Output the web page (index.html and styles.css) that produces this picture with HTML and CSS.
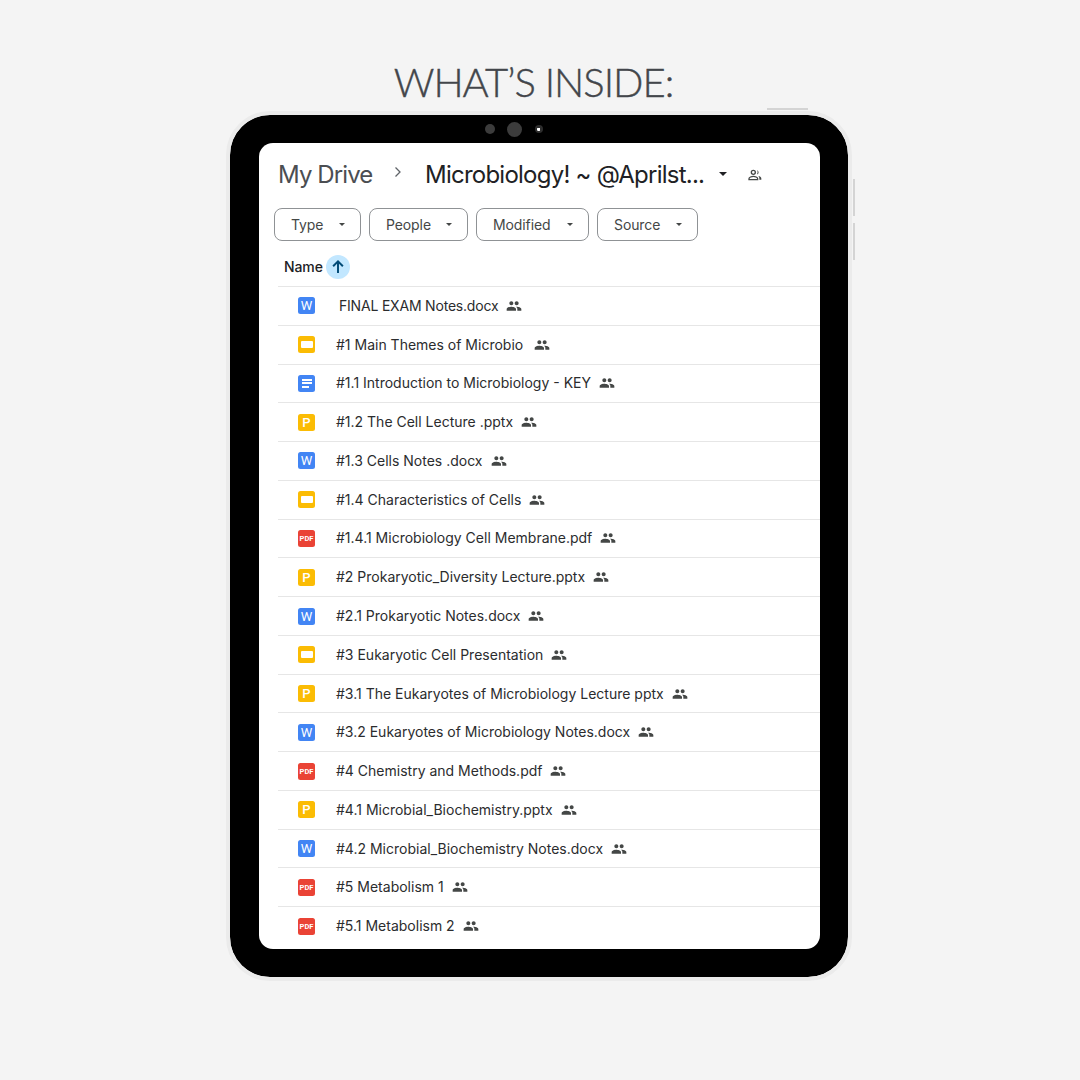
FILE: index.html
```html
<!DOCTYPE html>
<html lang="en">
<head>
<meta charset="utf-8">
<title>What's inside</title>
<link rel="stylesheet" href="styles.css">
</head>
<body>
<svg class="defs" width="0" height="0" aria-hidden="true">
  <symbol id="people" viewBox="0 0 24 24"><path d="M16 11c1.660 0 2.990-1.340 2.990-3S17.660 5 16 5s-3 1.340-3 3 1.340 3 3 3zm-8 0c1.660 0 2.990-1.340 2.990-3S9.660 5 8 5 5 6.340 5 8s1.340 3 3 3zm0 2c-2.330 0-7 1.170-7 3.500V19h14v-2.500c0-2.330-4.670-3.500-7-3.500zm8 0c-.29 0-.62.02-.97.05 1.160.84 1.970 1.970 1.970 3.450V19h6v-2.500c0-2.330-4.670-3.500-7-3.500z"/></symbol>
  <symbol id="shared" viewBox="0 0 24 24"><path fill="none" stroke="currentColor" stroke-width="2" d="M9.500 5a3 3 0 1 1 0 6 3 3 0 0 1 0-6zM3 19v-1.500c0-2 4-3.500 6.500-3.500s6.500 1.500 6.500 3.500V19z"/><path d="M15 5a3.200 3.200 0 0 1 0 6.200 5 5 0 0 0 0-6.200zM17 13.500c2.200.5 4.500 1.700 4.500 3.600V19h-3v-2c0-1.400-.6-2.600-1.500-3.500z"/></symbol>
</svg>
<main class="page">
  <h1 class="title">WHAT’S INSIDE:</h1>
  <div class="device">
    <span class="btn-top"></span>
    <span class="btn-side one"></span>
    <span class="btn-side two"></span>
    <div class="cams"><span class="cam"></span><span class="cam big"></span><span class="cam lens"></span></div>
    <section class="screen">
      <header class="crumbs">
        <span class="root">My Drive</span>
        <svg class="chev" viewBox="0 0 10 12"><path d="M2.500 1.500 7 6l-4.500 4.500" fill="none" stroke="#5f6368" stroke-width="1.300"/></svg>
        <span class="folder">Microbiology! ~ @Aprilst...</span>
        <span class="caret big"></span>
        <svg class="shared"><use href="#shared"/></svg>
      </header>
      <div class="chips">
        <div class="chip c1">Type<span class="caret"></span></div>
        <div class="chip c2">People<span class="caret"></span></div>
        <div class="chip c3">Modified<span class="caret"></span></div>
        <div class="chip c4">Source<span class="caret"></span></div>
      </div>
      <div class="sort">Name<span class="sort-btn"><svg viewBox="0 0 24 24"><path d="M12 20V5M5.500 11 12 4.500 18.500 11" fill="none" stroke="#004a77" stroke-width="2.600"/></svg></span></div>
      <ul class="files">
        <li class="row first"><span class="ic word">W</span><span class="name">FINAL EXAM Notes.docx</span><svg class="ppl"><use href="#people"/></svg></li>
        <li class="row"><span class="ic slides"><i></i></span><span class="name">#1 Main Themes of Microbio</span><svg class="ppl wide"><use href="#people"/></svg></li>
        <li class="row"><span class="ic docs"><i></i><i></i><i class="s"></i></span><span class="name">#1.1 Introduction to Microbiology - KEY</span><svg class="ppl"><use href="#people"/></svg></li>
        <li class="row"><span class="ic ppt">P</span><span class="name">#1.2 The Cell Lecture .pptx</span><svg class="ppl"><use href="#people"/></svg></li>
        <li class="row"><span class="ic word">W</span><span class="name">#1.3 Cells Notes .docx</span><svg class="ppl"><use href="#people"/></svg></li>
        <li class="row"><span class="ic slides"><i></i></span><span class="name">#1.4 Characteristics of Cells</span><svg class="ppl"><use href="#people"/></svg></li>
        <li class="row"><span class="ic pdf">PDF</span><span class="name">#1.4.1 Microbiology Cell Membrane.pdf</span><svg class="ppl"><use href="#people"/></svg></li>
        <li class="row"><span class="ic ppt">P</span><span class="name">#2 Prokaryotic_Diversity Lecture.pptx</span><svg class="ppl"><use href="#people"/></svg></li>
        <li class="row"><span class="ic word">W</span><span class="name">#2.1 Prokaryotic Notes.docx</span><svg class="ppl"><use href="#people"/></svg></li>
        <li class="row"><span class="ic slides"><i></i></span><span class="name">#3 Eukaryotic Cell Presentation</span><svg class="ppl"><use href="#people"/></svg></li>
        <li class="row"><span class="ic ppt">P</span><span class="name">#3.1 The Eukaryotes of Microbiology Lecture pptx</span><svg class="ppl"><use href="#people"/></svg></li>
        <li class="row"><span class="ic word">W</span><span class="name">#3.2 Eukaryotes of Microbiology Notes.docx</span><svg class="ppl"><use href="#people"/></svg></li>
        <li class="row"><span class="ic pdf">PDF</span><span class="name">#4 Chemistry and Methods.pdf</span><svg class="ppl"><use href="#people"/></svg></li>
        <li class="row"><span class="ic ppt">P</span><span class="name">#4.1 Microbial_Biochemistry.pptx</span><svg class="ppl"><use href="#people"/></svg></li>
        <li class="row"><span class="ic word">W</span><span class="name">#4.2 Microbial_Biochemistry Notes.docx</span><svg class="ppl"><use href="#people"/></svg></li>
        <li class="row"><span class="ic pdf">PDF</span><span class="name">#5 Metabolism 1</span><svg class="ppl"><use href="#people"/></svg></li>
        <li class="row"><span class="ic pdf">PDF</span><span class="name">#5.1 Metabolism 2</span><svg class="ppl"><use href="#people"/></svg></li>
      </ul>
    </section>
  </div>
</main>
</body>
</html>
```
FILE: styles.css
```css
* { box-sizing: border-box; }
html, body { margin: 0; height: 100%; }
body { background: #f4f4f4; font-family: "Inter", "Liberation Sans", sans-serif; overflow: hidden; }
.defs { position: absolute; }
.page { width: 1080px; height: 1080px; padding-top: 58px; display: flex; flex-direction: column; align-items: center; }
.title { margin: 0 13px 5px 0; font: 300 40px/48px "Lato", sans-serif; color: #43464b; letter-spacing: -1px; -webkit-text-stroke: .4px #43464b; }
.device { position: relative; flex: none; width: 626px; height: 870px; margin-right: 2px; padding: 28px 28px 28px 29px; background: #000; background-clip: padding-box; border: 4px solid #ebebeb; border-radius: 44px; }
.btn-top { position: absolute; top: -7px; left: 537px; width: 41px; height: 2px; background: #d4d4d4; }
.btn-side { position: absolute; right: -7px; width: 2px; background: #d4d4d4; }
.btn-side.one { top: 64px; height: 37px; }
.btn-side.two { top: 108px; height: 37px; }
.cams { position: absolute; top: 6px; left: 255px; height: 16px; display: flex; align-items: center; gap: 12px; }
.cam { width: 10px; height: 10px; border-radius: 50%; background: #3c3c3c; }
.cam.big { width: 15px; height: 15px; }
.cam.lens { width: 8px; height: 8px; margin-left: 1px; background: radial-gradient(circle at 45% 55%, #fff 0 22%, #2e2e2e 30%); }
.screen { height: 806px; background: #fff; border-radius: 14px; overflow: hidden; display: flex; flex-direction: column; }
.crumbs { height: 60px; padding: 4px 0 0 19px; display: flex; align-items: center; white-space: nowrap; }
.root { width: 115px; font: 400 24px/30px "Inter", sans-serif; letter-spacing: -.9px; color: #4b4e52; }
.chev { width: 10px; height: 12px; margin-top: -6px; }
.folder { margin-left: 22px; font: 400 24px/30px "Inter", sans-serif; letter-spacing: -.76px; color: #202124; }
.caret { width: 0; height: 0; border: 3px solid transparent; border-top-color: #444746; border-bottom: 0; }
.caret.big { margin: -3px 0 0 15px; border-width: 4px; border-bottom: 0; border-top-color: #202124; }
.shared { width: 16px; height: 16px; margin-left: 20px; color: #444746; fill: #444746; }
.chips { display: flex; gap: 8px; padding: 5px 0 0 15px; }
.chip { height: 33px; padding-left: 16px; display: flex; align-items: center; border: 1px solid #8f9295; border-radius: 8px; font-size: 14px; letter-spacing: -.1px; color: #444746; }
.c1 { width: 87px; } .c2 { width: 99px; } .c3 { width: 113px; } .c4 { width: 101px; }
.chip .caret { margin-left: auto; margin-right: 15px; }
.sort { height: 45px; padding: 6px 0 0 25px; display: flex; align-items: center; font-size: 14px; font-weight: 500; letter-spacing: -.1px; color: #202124; }
.sort-btn { width: 24px; height: 24px; margin-left: 3px; border-radius: 50%; background: #c2e7ff; display: flex; align-items: center; justify-content: center; }
.sort-btn svg { width: 18px; height: 18px; }
.files { list-style: none; margin: 0 0 0 19px; padding: 0; }
.row { height: 38.780px; padding-left: 20px; display: flex; align-items: center; border-top: 1.400px solid #e6e6e6; }
.ic { flex: none; width: 17px; height: 17px; border-radius: 2.500px; color: #fff; display: flex; align-items: center; justify-content: center; font: 400 13px/17px "Roboto", sans-serif; }
.word { background: #4285f4; }
.ppt { background: #fbbc04; font-weight: 500; }
.pdf { background: #ea4335; font: 700 7.500px/17px "Roboto", sans-serif; }
.slides { background: #fbbc04; }
.slides i { width: 12px; height: 7px; border-radius: 1px; background: #fff; }
.docs { background: #4285f4; flex-direction: column; align-items: flex-start; gap: 1.500px; padding-left: 3.500px; }
.docs i { width: 10px; height: 2px; background: #fff; }
.docs i.s { width: 7px; }
.name { margin-left: 21px; font-size: 14px; line-height: 20px; color: #2b2c2e; white-space: nowrap; }
.first .name { margin-left: 24px; letter-spacing: -.2px; }
.ppl { width: 16px; height: 16px; margin-left: 8px; fill: #444746; }
.ppl.wide { margin-left: 11px; }
```
